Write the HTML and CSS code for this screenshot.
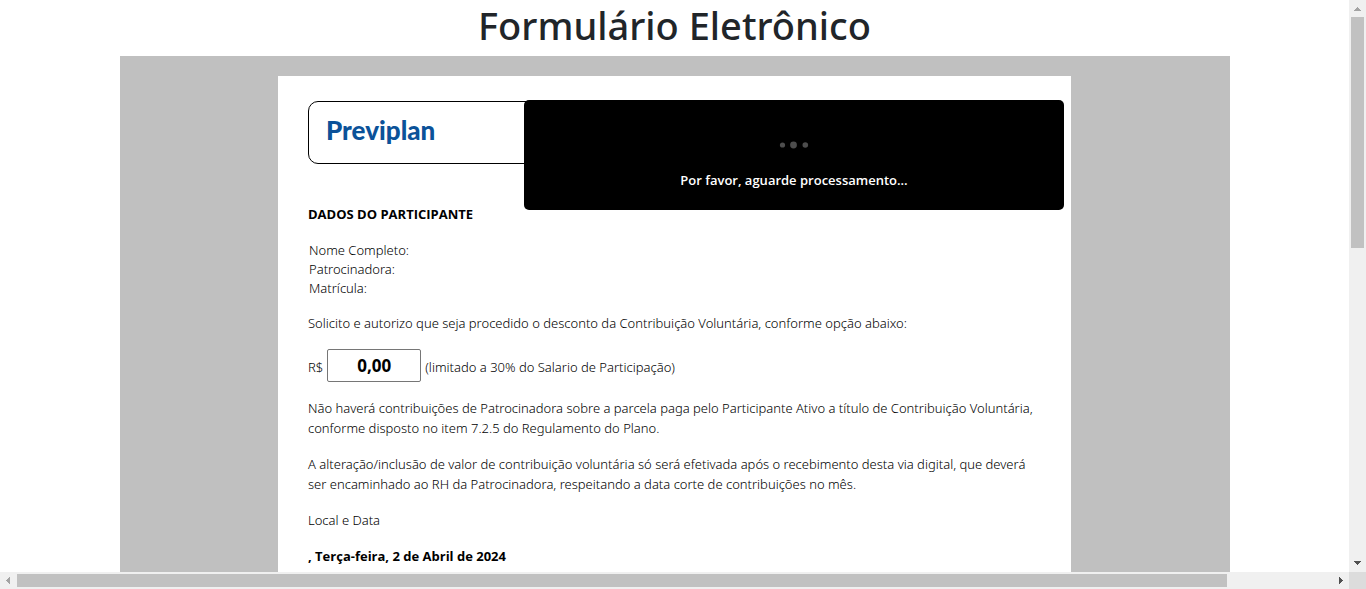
FILE: index.html
```html
<!DOCTYPE html>
<html lang="pt-BR">
<head>
<meta charset="utf-8">
<title>Formulário Eletrônico</title>
<meta name="viewport" content="width=device-width, initial-scale=1">
<link rel="stylesheet" href="styles.css">
</head>
<body>
<div class="frame">
  <main class="view">
    <h1 class="title">Formulário Eletrônico</h1>
    <div class="backdrop">
      <form class="paper">
        <header class="letterhead"><span class="logo">Previplan</span></header>
        <h2 class="section-title">DADOS DO PARTICIPANTE</h2>
        <table class="fields">
          <tr><th scope="row">Nome Completo:</th><td></td></tr>
          <tr><th scope="row">Patrocinadora:</th><td></td></tr>
          <tr><th scope="row">Matrícula:</th><td></td></tr>
        </table>
        <p class="text">Solicito e autorizo que seja procedido o desconto da Contribuição Voluntária, conforme opção abaixo:</p>
        <div class="amount">
          <label for="valor">R$</label>
          <input class="amount-input" id="valor" type="text" value="0,00">
          <span>(limitado a 30% do Salario de Participação)</span>
        </div>
        <p class="text">Não haverá contribuições de Patrocinadora sobre a parcela paga pelo Participante Ativo a título de Contribuição Voluntária, conforme disposto no item 7.2.5 do Regulamento do Plano.</p>
        <p class="text">A alteração/inclusão de valor de contribuição voluntária só será efetivada após o recebimento desta via digital, que deverá ser encaminhado ao RH da Patrocinadora, respeitando a data corte de contribuições no mês.</p>
        <p class="text">Local e Data</p>
        <p class="text strong">, Terça-feira, 2 de Abril de 2024</p>
      </form>
    </div>
    <div class="loading" role="status">
      <svg class="dots" width="30" height="10" viewBox="0 0 30 10" aria-hidden="true">
        <circle cx="3.500" cy="5" r="2.600"/><circle cx="14.500" cy="5" r="3.400"/><circle cx="26.300" cy="5" r="2.800"/>
      </svg>
      <span>Por favor, aguarde processamento...</span>
    </div>
  </main>
  <div class="bar bar-y" aria-hidden="true">
    <svg class="arrow dim" viewBox="0 0 17 17"><path d="M5 11v-1h1v-1h1v-1h1v-1h1v1h1v1h1v1h1v1z"/></svg>
    <div class="track"><div class="thumb"></div></div>
    <svg class="arrow" viewBox="0 0 17 17"><path d="M5 6h7v1h-1v1h-1v1h-1v1h-1v-1h-1v-1h-1v-1h-1z"/></svg>
  </div>
  <div class="bar bar-x" aria-hidden="true">
    <svg class="arrow dim" viewBox="0 0 17 17"><path d="M10 5v7h-1v-1h-1v-1h-1v-1h-1v-1h1v-1h1v-1h1v-1z"/></svg>
    <div class="track"><div class="thumb"></div></div>
    <svg class="arrow" viewBox="0 0 17 17"><path d="M7 5v7h1v-1h1v-1h1v-1h1v-1h-1v-1h-1v-1h-1v-1z"/></svg>
  </div>
  <div class="corner"></div>
</div>
</body>
</html>
```
FILE: styles.css
```css
* { box-sizing: border-box; }

body {
  margin: 0;
  background: #fff;
  color: #000;
  font: 300 13px/20px "Noto Sans", "Open Sans", sans-serif;
}

.frame {
  display: grid;
  grid-template: minmax(0, 1fr) 17px / minmax(0, 1fr) 17px;
  height: 100vh;
}

.view {
  position: relative;
  display: flex;
  flex-direction: column;
  align-items: center;
  overflow: hidden;
}

.title {
  margin: 0 0 6px;
  color: #212529;
  font-size: 38px;
  font-weight: 500;
  line-height: 50px;
}

.backdrop {
  display: flex;
  flex: 1 0 auto;
  justify-content: center;
  width: 100%;
  max-width: 1110px;
  padding-top: 20px;
  background: silver;
}

.paper {
  width: 100%;
  max-width: 793px;
  padding: 25px 34px 0 30px;
  background: #fff;
}

.letterhead {
  height: 63px;
  padding: 8px 17px;
  border: 1px solid #000;
  border-radius: 10px;
}

.logo {
  color: #0b5299;
  font: 900 26px/40px Lato, sans-serif;
}

.section-title {
  margin: 40px 0 17px;
  color: #000;
  font: 700 13px/20px "Open Sans", sans-serif;
}

.fields {
  margin-bottom: 15px;
  border-collapse: collapse;
}

.fields th {
  padding: 0 1px;
  font-weight: 300;
  line-height: 19px;
  text-align: left;
}

.fields td { padding: 0; }

.text { margin: 0 0 16px; }

.strong { font: 700 13px/20px "Open Sans", sans-serif; }

.amount {
  display: flex;
  align-items: baseline;
  gap: 4px;
  margin-bottom: 16px;
}

.amount-input {
  width: 94px;
  height: 33px;
  padding: 0;
  border: 1px solid #767676;
  border-radius: 2px;
  background: #fff;
  color: #000;
  font: 700 17px/24px "Open Sans", sans-serif;
  text-align: center;
}

.loading {
  position: absolute;
  top: 100px;
  left: 524px;
  display: flex;
  flex-direction: column;
  align-items: center;
  gap: 20px;
  width: 540px;
  padding: 40px 20px 20px;
  border-radius: 5px;
  background: #000;
  color: #fff;
  font: 600 13px/20px "Open Sans", sans-serif;
}

.dots { fill: #4d4d4d; }

.bar {
  display: flex;
  background: #f0f0f0;
}

.bar-y { flex-direction: column; }

.arrow {
  flex: none;
  width: 17px;
  height: 17px;
  fill: #505050;
}

.dim { fill: #a3a3a3; }

.track { flex: 1; }

.thumb { background: #c1c1c1; }

.bar-y .thumb {
  height: 43%;
  margin: 0 2px;
}

.bar-x .track { padding: 2px 0; }

.bar-x .thumb {
  width: 92%;
  height: 13px;
}

.corner { background: #dcdcdc; }
```
